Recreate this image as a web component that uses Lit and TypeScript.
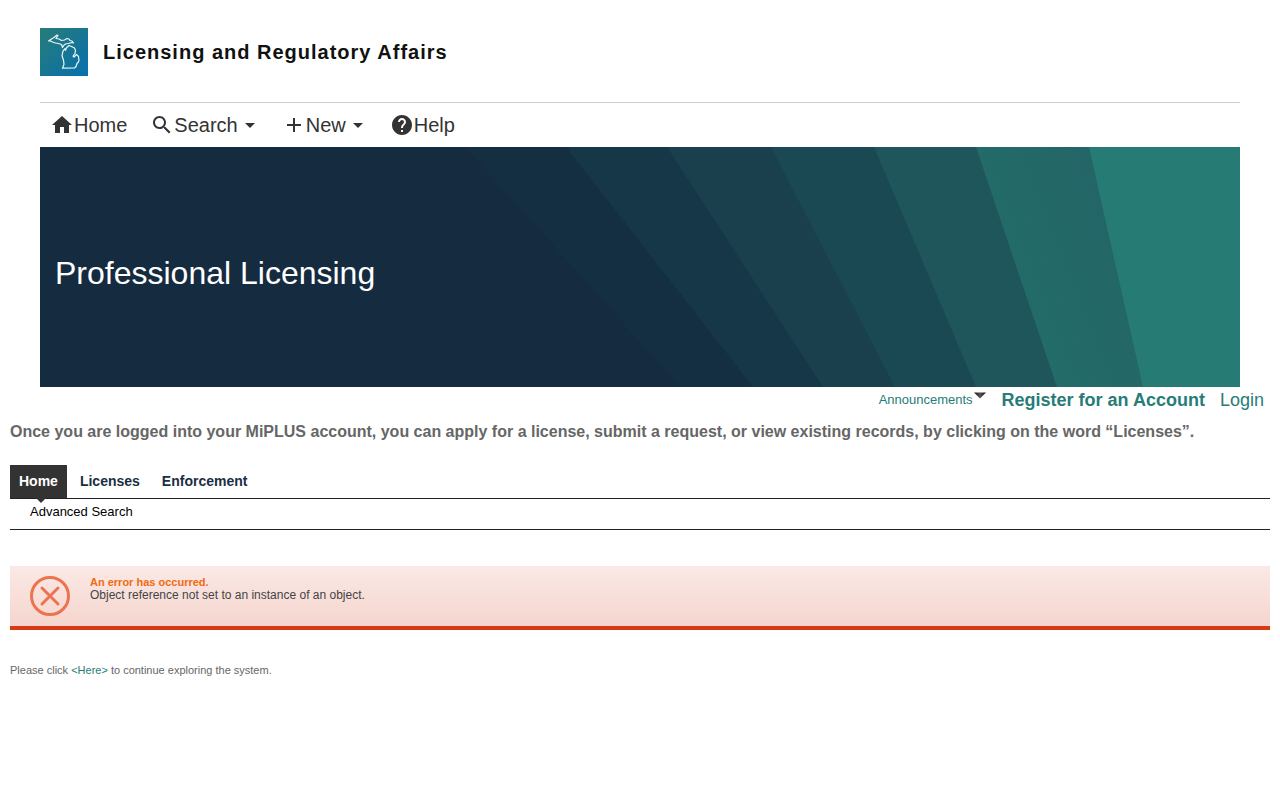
import { LitElement, html, css, svg } from "lit";
import { customElement } from "lit/decorators.js";

interface Ray {
  top: number;
  bottom: number;
  fill: string;
}

const RAYS: Ray[] = [
  { top: 425, bottom: 640, fill: "#142f42" },
  { top: 526, bottom: 713, fill: "#163748" },
  { top: 627, bottom: 783, fill: "#1a404e" },
  { top: 731, bottom: 855, fill: "#1a4954" },
  { top: 834, bottom: 936, fill: "#1f565b" },
  { top: 936, bottom: 1017, fill: "url(#fold)" },
  { top: 1049, bottom: 1103, fill: "#277b75" },
];

const ICONS = {
  home: "M10 20v-6h4v6h5v-8h3L12 3 2 12h3v8z",
  search:
    "M15.5 14h-.79l-.28-.27C15.41 12.59 16 11.11 16 9.5 16 5.91 13.09 3 9.5 3S3 5.91 3 9.5 5.91 16 9.5 16c1.61 0 3.09-.59 4.23-1.57l.27.28v.79l5 4.99L20.49 19l-4.99-5zm-6 0C7.01 14 5 11.99 5 9.5S7.01 5 9.5 5 14 7.01 14 9.5 11.99 14 9.5 14z",
  add: "M19 13h-6v6h-2v-6H5v-2h6V5h2v6h6v2z",
  help: "M12 2C6.48 2 2 6.48 2 12s4.48 10 10 10 10-4.480 10-10S17.520 2 12 2zm1 17h-2v-2h2v2zm2.070-7.750l-.9.920C13.450 12.900 13 13.500 13 15h-2v-.5c0-1.100.450-2.100 1.170-2.830l1.240-1.260c.370-.360.590-.860.590-1.410 0-1.100-.9-2-2-2s-2 .9-2 2H8c0-2.210 1.790-4 4-4s4 1.790 4 4c0 .880-.360 1.680-.930 2.250z",
};

@customElement("app-root")
export class AppRoot extends LitElement {
  static styles = css`
    :host {
      display: block;
      font-family: "Liberation Sans", Arial, sans-serif;
      color: #666;
      background: #fff;
    }
    a {
      color: #277c78;
      text-decoration: none;
    }
    button {
      font: inherit;
      color: inherit;
      background: none;
      border: 0;
      padding: 0;
      cursor: pointer;
    }
    svg {
      display: block;
      flex: none;
    }
    .site {
      padding: 0 40px;
    }
    .brand {
      display: flex;
      align-items: center;
      gap: 15px;
      padding: 28px 0 26px;
      border-bottom: 1px solid #ccc;
    }
    .brand-name {
      margin: 0;
      font-size: 20px;
      line-height: 24px;
      letter-spacing: 1px;
      color: #111;
    }
    .menu {
      display: flex;
      align-items: center;
      height: 44px;
      padding: 0 12px;
      gap: 25px;
      font-size: 20px;
      line-height: 24px;
    }
    .menu-item {
      display: flex;
      align-items: center;
      gap: 2px;
      color: #333;
    }
    .caret {
      margin: 0 4px 0 5px;
      border: 5px solid transparent;
      border-top-color: #333;
      border-bottom: 0;
    }
    .banner {
      display: grid;
      height: 240px;
      background: #152b40;
    }
    .banner > * {
      grid-area: 1 / 1;
    }
    .rays {
      width: 100%;
      height: 240px;
    }
    .banner-title {
      align-self: center;
      z-index: 1;
      margin: 0;
      padding: 12px 15px 0;
      font-size: 32px;
      line-height: 40px;
      font-weight: 400;
      color: #fff;
    }
    .account {
      display: flex;
      justify-content: flex-end;
      align-items: flex-start;
      gap: 15px;
      padding: 2px 16px 0 10px;
      font-size: 18px;
      line-height: 22px;
    }
    .announce {
      display: flex;
      gap: 1px;
      font-size: 13px;
      line-height: 22px;
      color: #277c78;
    }
    .announce svg {
      margin-top: 3px;
    }
    .register {
      font-weight: 700;
    }
    .content {
      padding: 0 10px;
    }
    .intro {
      margin: 11px 0 24px;
      font-size: 16px;
      line-height: 19px;
      font-weight: 700;
    }
    .tabs {
      display: flex;
      gap: 4px;
      font-size: 14px;
      line-height: 33px;
      font-weight: 700;
      border-bottom: 1px solid #222;
    }
    .tab {
      padding: 0 9px;
      color: #1b2e42;
    }
    .tab.active {
      position: relative;
      color: #fff;
      background: #333;
    }
    .tab.active::after {
      content: "";
      position: absolute;
      left: 26px;
      top: 100%;
      border: 5px solid transparent;
      border-top-color: #333;
      border-bottom: 0;
    }
    .subtabs {
      padding: 4px 20px 8px;
      font-size: 13px;
      line-height: 18px;
      border-bottom: 1px solid #222;
    }
    .subtab {
      color: #000;
    }
    .error {
      display: flex;
      gap: 20px;
      margin-top: 36px;
      padding: 10px 20px;
      border-bottom: 4px solid #d33a15;
      background: linear-gradient(#fbe9e5, #f5d5ce);
      font-size: 12px;
      line-height: 13px;
      color: #444;
    }
    .error-title {
      margin: 0;
      font-size: 11px;
      line-height: 13px;
      color: #f26a11;
    }
    .error p {
      margin: 0;
    }
    .next {
      margin: 34px 0 0;
      font-size: 11px;
      line-height: 13px;
    }
  `;

  private icon(name: keyof typeof ICONS) {
    return html`<svg width="20" height="20" viewBox="2 2 20 20" fill="#333" aria-hidden="true">
      <path d=${ICONS[name]} />
    </svg>`;
  }

  private logo() {
    return svg`<svg width="48" height="48" viewBox="0 0 48 48" aria-hidden="true">
      <defs><linearGradient id="tile" x1="0" y1="0" x2="1" y2="1">
        <stop offset="0" stop-color="#277c78"/><stop offset="1" stop-color="#0870ad"/>
      </linearGradient></defs>
      <rect width="48" height="48" fill="url(#tile)"/>
      <g fill="none" stroke="#e8f6fa" stroke-width="1.2" stroke-linejoin="round">
        <path d="M8.500 13 11.500 11l2.500-1.500 3-2.500 1 .500-2 3 3 .500 2.500 1.500 3-.500 2.500-1.500 2 .500 1 1.500 2 .500 1.500 2-2-.500-3 1-3 .500-1.500 1-1.500 2.500-1-3-3-1-3-.500-3-1-2-1z"/>
        <path d="M29 17.500l2.500 1 3 1.500 1 2.500-.500 3-2 2.500 1 1 2.500-2.500 2 2 .500 4-1 2-1 1-1 3-1.500 1.500-12 .200 1.500-4-.500-4-1.500-4.500 1-4.500 2-2.500.500 1.500 1-2.500z"/>
      </g>
    </svg>`;
  }

  private rays() {
    return svg`<svg class="rays" viewBox="0 0 1200 240" preserveAspectRatio="none" aria-hidden="true">
      <defs><linearGradient id="fold" gradientUnits="userSpaceOnUse" x1="970" y1="130" x2="1070" y2="90">
        <stop offset="0" stop-color="#226c69"/><stop offset="1" stop-color="#246667"/>
      </linearGradient></defs>
      ${RAYS.map((r) => svg`<polygon points="${r.top},0 1200,0 1200,240 ${r.bottom},240" fill="${r.fill}"/>`)}
    </svg>`;
  }

  render() {
    return html`
      <header class="site">
        <div class="brand">
          ${this.logo()}
          <h1 class="brand-name">Licensing and Regulatory Affairs</h1>
        </div>
        <nav class="menu" aria-label="Main">
          <a class="menu-item" href="#home">${this.icon("home")} Home</a>
          <button class="menu-item" type="button">${this.icon("search")} Search <span class="caret"></span></button>
          <button class="menu-item" type="button">${this.icon("add")} New <span class="caret"></span></button>
          <a class="menu-item" href="#help">${this.icon("help")} Help</a>
        </nav>
        <div class="banner">
          ${this.rays()}
          <h2 class="banner-title">Professional Licensing</h2>
        </div>
      </header>
      <nav class="account" aria-label="Account">
        <button class="announce" type="button">
          Announcements
          <svg width="13" height="7" viewBox="0 0 13 7" aria-hidden="true">
            <defs><linearGradient id="arrow" x1="0" y1="0" x2="1" y2="0">
              <stop offset="0" stop-color="#111" /><stop offset="0.500" stop-color="#555" /><stop offset="1" stop-color="#111" />
            </linearGradient></defs>
            <path d="M0 0.500h12L6 6.500z" fill="url(#arrow)" />
          </svg>
        </button>
        <a class="register" href="#register">Register for an Account</a>
        <a href="#login">Login</a>
      </nav>
      <main class="content">
        <p class="intro">
          Once you are logged into your MiPLUS account, you can apply for a license, submit a request, or view existing
          records, by clicking on the word “Licenses”.
        </p>
        <nav class="tabs" aria-label="Sections">
          <a class="tab active" href="#home" aria-current="page">Home</a>
          <a class="tab" href="#licenses">Licenses</a>
          <a class="tab" href="#enforcement">Enforcement</a>
        </nav>
        <div class="subtabs"><a class="subtab" href="#advanced">Advanced Search</a></div>
        <section class="error" role="alert">
          <svg width="40" height="40" viewBox="0 0 40 40" fill="none" stroke="#ec7350" stroke-width="3" aria-hidden="true">
            <circle cx="20" cy="20" r="18.500" />
            <path d="M12 12l16 16M28 12L12 28" stroke-linecap="round" />
          </svg>
          <div>
            <h3 class="error-title">An error has occurred.</h3>
            <p>Object reference not set to an instance of an object.</p>
          </div>
        </section>
        <p class="next">Please click <a href="#here">&lt;Here&gt;</a> to continue exploring the system.</p>
      </main>
    `;
  }
}
